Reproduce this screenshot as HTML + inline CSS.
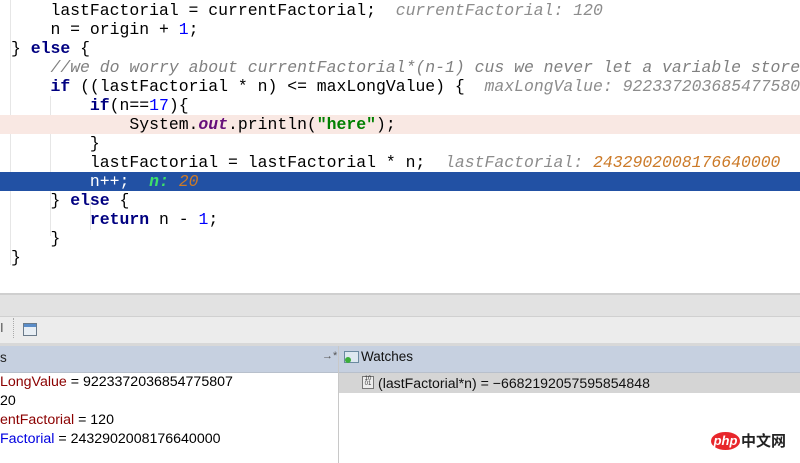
<!DOCTYPE html>
<html><head><meta charset="utf-8"><style>
html,body{margin:0;padding:0;width:800px;height:463px;overflow:hidden;background:#fff;position:relative;font-family:"Liberation Sans",sans-serif}
.ln{position:absolute;left:0;width:800px;height:19px;line-height:19px;font-family:"Liberation Mono",monospace;font-size:16.45px;white-space:pre;color:#000}
.ln span.t{position:absolute;left:11px;top:0}
.k{color:#000080;font-weight:bold}
.n{color:#0000ff}
.s{color:#008000;font-weight:bold}
.o{color:#660e7a;font-weight:bold;font-style:italic}
.c{color:#808080;font-style:italic}
.h{color:#8c8c8c;font-style:italic}
.hv{color:#cc7a28;font-style:italic}
.g{position:absolute;width:1px;background:#e6e6e6}
.vr{position:absolute;left:0;font-size:14.2px;height:19px;line-height:19px;white-space:pre}
.r{color:#8b0000}.b{color:#0000e0}
</style></head><body>
<div class="g" style="left:10px;top:0;height:265px"></div>
<div class="g" style="left:50px;top:96px;height:140px"></div>
<div class="g" style="left:90px;top:200px;height:30px"></div>
<div style="position:absolute;left:0;top:115px;width:800px;height:19px;background:#f9e8e3"></div>
<div style="position:absolute;left:0;top:172px;width:800px;height:19px;background:#2251a4"></div>
<div class="ln" style="top:1px"><span class="t">    lastFactorial = currentFactorial;  <span class="h">currentFactorial: 120</span></span></div>
<div class="ln" style="top:20px"><span class="t">    n = origin + <span class="n">1</span>;</span></div>
<div class="ln" style="top:39px"><span class="t">} <span class="k">else</span> {</span></div>
<div class="ln" style="top:58px"><span class="t">    <span class="c">//we do worry about currentFactorial*(n-1) cus we never let a variable store</span></span></div>
<div class="ln" style="top:77px"><span class="t">    <span class="k">if</span> ((lastFactorial * n) &lt;= maxLongValue) {  <span class="h">maxLongValue: 9223372036854775807</span></span></div>
<div class="ln" style="top:96px"><span class="t">        <span class="k">if</span>(n==<span class="n">17</span>){</span></div>
<div class="ln" style="top:115px"><span class="t">            System.<span class="o">out</span>.println(<span class="s">"here"</span>);</span></div>
<div class="ln" style="top:134px"><span class="t">        }</span></div>
<div class="ln" style="top:153px"><span class="t">        lastFactorial = lastFactorial * n;  <span class="h">lastFactorial: </span><span class="hv">2432902008176640000</span></span></div>
<div class="ln" style="top:172px;color:#fff"><span class="t">        n++;  <span style="color:#3ee06a;font-style:italic;font-weight:bold">n: </span><span class="hv">20</span></span></div>
<div class="ln" style="top:191px"><span class="t">    } <span class="k">else</span> {</span></div>
<div class="ln" style="top:210px"><span class="t">        <span class="k">return</span> n - <span class="n">1</span>;</span></div>
<div class="ln" style="top:229px"><span class="t">    }</span></div>
<div class="ln" style="top:248px"><span class="t">}</span></div>

<div style="position:absolute;left:0;top:293px;width:800px;height:2px;background:#cfcfcf"></div>
<div style="position:absolute;left:0;top:295px;width:800px;height:22px;background:#e2e2e2"></div>
<div style="position:absolute;left:0;top:316px;width:800px;height:1px;background:#d0d0d0"></div>
<div style="position:absolute;left:0;top:317px;width:800px;height:26px;background:#ececec"></div>
<div style="position:absolute;left:0;top:320px;font-size:13px;color:#555">I</div>
<div style="position:absolute;left:13px;top:318px;width:0;height:20px;border-left:1px dotted #aaa"></div>
<div style="position:absolute;left:23px;top:323px;width:12px;height:11px;border:1px solid #6a7a8a;background:linear-gradient(#5a8cc8 0 3px,#e8eef4 3px)"></div>
<div style="position:absolute;left:0;top:343px;width:800px;height:3px;background:#d8d8d8"></div>
<div style="position:absolute;left:0;top:346px;width:800px;height:26px;background:#c6d0e0"></div>
<div style="position:absolute;left:0;top:372px;width:800px;height:1px;background:#b8c0cc"></div>
<div style="position:absolute;left:0;top:350px;font-size:13.5px;color:#222">s</div>
<div style="position:absolute;left:322px;top:350px;font-size:11px;color:#555">→*</div>
<div style="position:absolute;left:338px;top:346px;width:1px;height:117px;background:#c8c8c8"></div>
<div style="position:absolute;left:344px;top:351px;width:13px;height:10px;border:1px solid #6a8aa0;background:#dde8f0"></div>
<div style="position:absolute;left:345px;top:357px;width:6px;height:6px;border-radius:50%;background:#3cae3c"></div>
<div style="position:absolute;left:361px;top:349px;font-size:13.5px;color:#111">Watches</div>
<div style="position:absolute;left:339px;top:373px;width:461px;height:20px;background:#d5d5d5"></div>
<div style="position:absolute;left:362px;top:376px;width:10px;height:11px;border:1px solid #777;background:#eee;font-size:6px;line-height:5px;text-align:center;color:#333">10<br>01</div>
<div style="position:absolute;left:378px;top:373px;font-size:14.1px;line-height:20px;color:#111">(lastFactorial*n) = −6682192057595854848</div>
<div class="vr" style="top:373px"><span class="r">LongValue</span> = 9223372036854775807</div>
<div class="vr" style="top:392px">20</div>
<div class="vr" style="top:411px"><span class="r">entFactorial</span> = 120</div>
<div class="vr" style="top:430px"><span class="b">Factorial</span> = 2432902008176640000</div>
<div style="position:absolute;left:711px;top:432px;width:29px;height:18px;border-radius:50%;background:#e8262b;color:#fff;font-size:13px;line-height:17px;text-align:center;font-style:italic;font-weight:bold">php</div>
<div style="position:absolute;left:741px;top:431px;font-family:'Noto Sans CJK SC',sans-serif;font-size:15px;line-height:20px;color:#222;font-weight:bold">中文网</div>
</body></html>
